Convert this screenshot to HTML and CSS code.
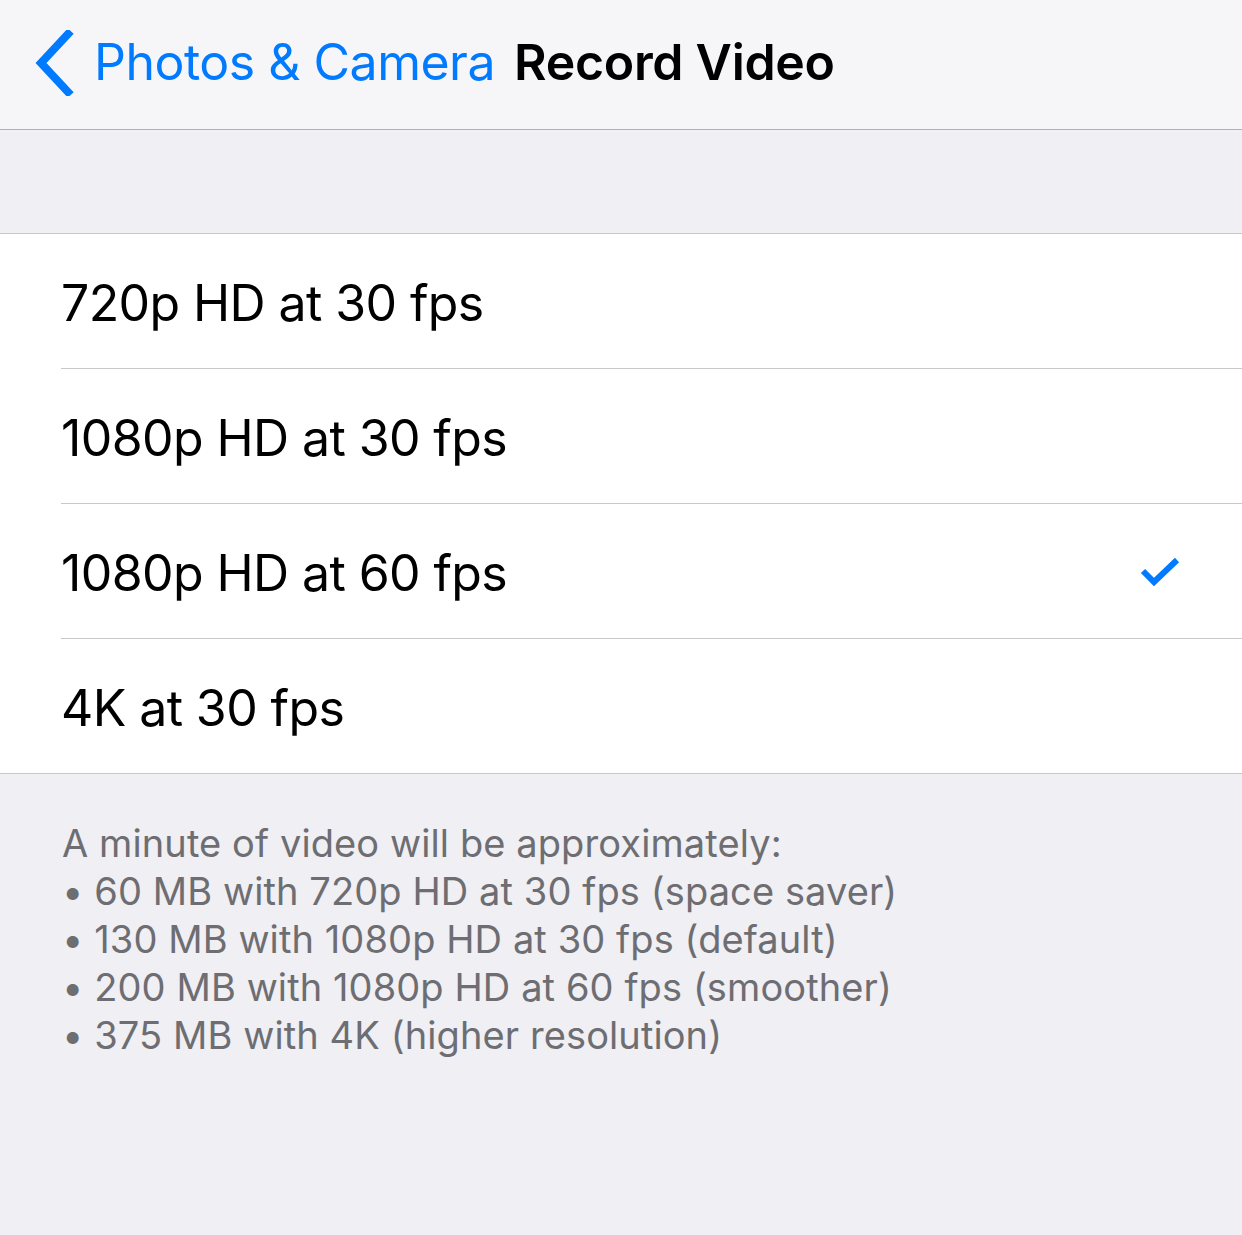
FILE: index.html
```html
<!DOCTYPE html>
<html>
<head>
<meta charset="utf-8">
<link rel="stylesheet" href="styles.css">
</head>
<body>
<div class="nav">
  <svg class="chev" width="40" height="66" viewBox="0 0 40 66"><path d="M34 4 L7 33 L34 62" fill="none" stroke="#007aff" stroke-width="8" stroke-linecap="square"/></svg>
  <span class="back">Photos &amp; Camera</span>
  <span class="title">Record Video</span>
</div>
<div class="spacer"></div>
<div class="group">
  <div class="row"><span class="label">720p HD at 30 fps</span></div>
  <div class="row"><span class="label">1080p HD at 30 fps</span></div>
  <div class="row"><span class="label">1080p HD at 60 fps</span>
    <svg class="check" width="40" height="32" viewBox="0 0 40 32"><path d="M3 16 L14 27 L37 5" fill="none" stroke="#007aff" stroke-width="6"/></svg>
  </div>
  <div class="row"><span class="label">4K at 30 fps</span></div>
</div>
<div class="footer">
  <p>A minute of video will be approximately:</p>
  <p>• 60 MB with 720p HD at 30 fps (space saver)</p>
  <p>• 130 MB with 1080p HD at 30 fps (default)</p>
  <p>• 200 MB with 1080p HD at 60 fps (smoother)</p>
  <p>• 375 MB with 4K (higher resolution)</p>
</div>
</body>
</html>
```
FILE: styles.css
```css
html, body { margin: 0; padding: 0; }
body {
  background: #efeff4;
  font-family: Inter, "Noto Sans", sans-serif;
  width: 1242px;
  height: 1235px;
  overflow: hidden;
}
.nav {
  height: 123px;
  padding-bottom: 6px;
  background: #f6f6f8;
  border-bottom: 1px solid #b1b1b4;
  display: flex;
  align-items: center;
  padding-left: 34px;
  box-sizing: content-box;
}
.chev { flex: none; margin-right: 20px; margin-top: 2px; }
.back {
  color: #007aff;
  font-size: 50px;
  letter-spacing: -0.5px;
  margin-right: 19px;
}
.title {
  color: #000;
  font-size: 50px;
  font-weight: 600;
  letter-spacing: -0.3px;
}
.spacer {
  height: 103px;
  border-bottom: 1px solid #c8c7cc;
}
.group {
  background: #fff;
  border-bottom: 1px solid #c8c7cc;
}
.row {
  height: 134px;
  margin-left: 61px;
  border-bottom: 1px solid #c8c7cc;
  display: flex;
  align-items: center;
  justify-content: space-between;
  padding-right: 62px;
}
.row:last-child { border-bottom: none; }
.label {
  font-size: 50px;
  color: #000;
  letter-spacing: -0.6px;
  padding-top: 4px;
}
.check { flex: none; }
.footer {
  padding: 45px 0 0 62px;
  color: #6d6d72;
  font-size: 38px;
  line-height: 48px;
  letter-spacing: 0.1px;
}
.footer p { margin: 0; }
```
